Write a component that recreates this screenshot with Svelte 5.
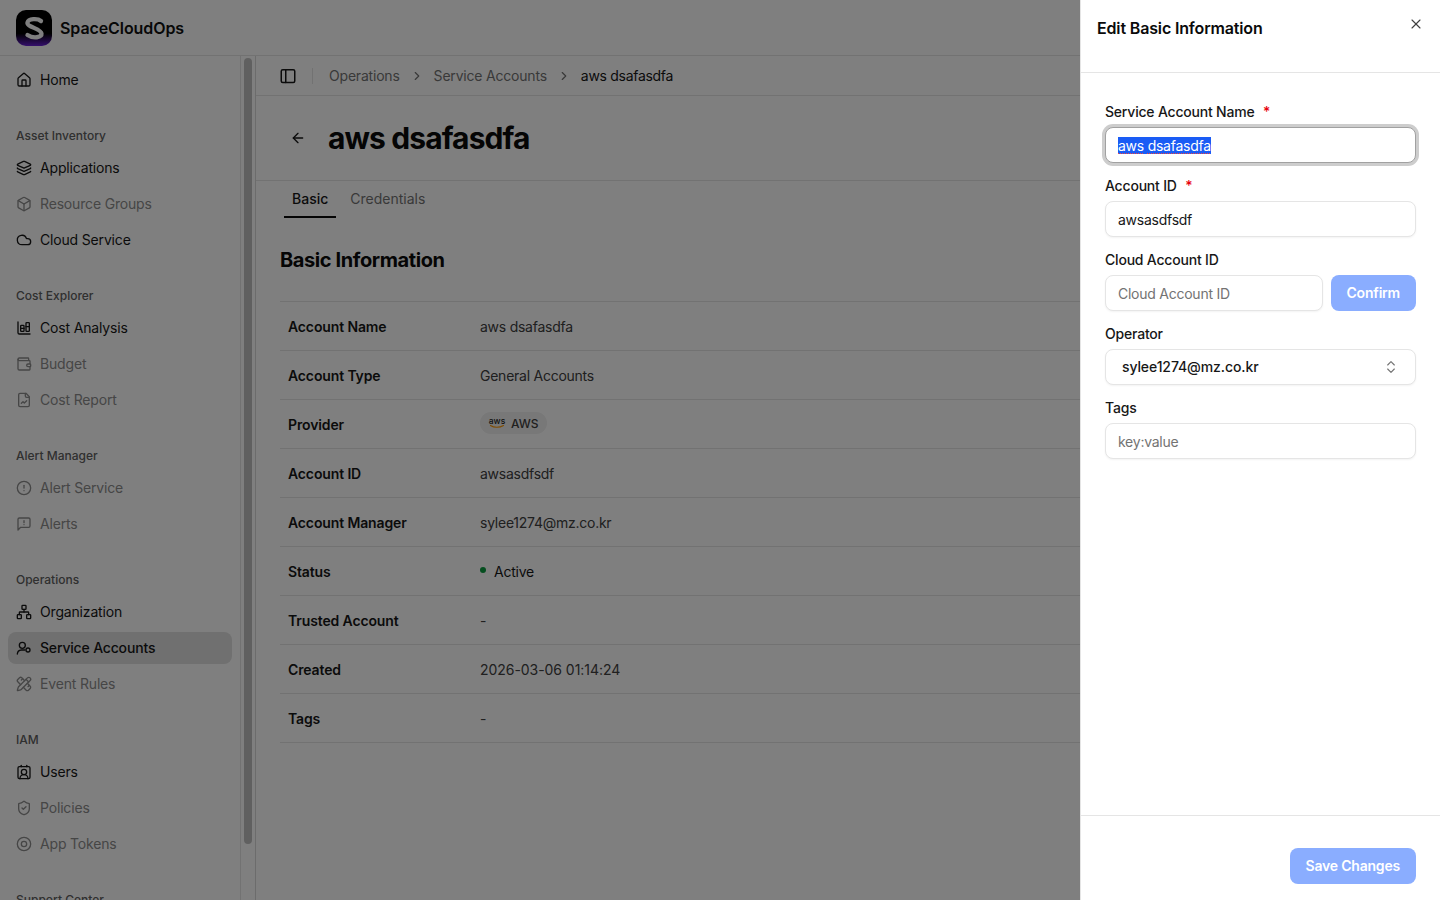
<script>
  import { onMount } from 'svelte';

  let nameInput;

  const icons = {
    home: '<path d="M15 21v-8a1 1 0 0 0-1-1h-4a1 1 0 0 0-1 1v8"/><path d="M3 10a2 2 0 0 1 .709-1.528l7-5.999a2 2 0 0 1 2.582 0l7 5.999A2 2 0 0 1 21 10v9a2 2 0 0 1-2 2H5a2 2 0 0 1-2-2z"/>',
    layers: '<path d="M12.83 2.18a2 2 0 0 0-1.66 0L2.6 6.08a1 1 0 0 0 0 1.83l8.58 3.91a2 2 0 0 0 1.66 0l8.58-3.9a1 1 0 0 0 0-1.83z"/><path d="M2 12a1 1 0 0 0 .58.91l8.6 3.91a2 2 0 0 0 1.65 0l8.58-3.9A1 1 0 0 0 22 12"/><path d="M2 17a1 1 0 0 0 .58.91l8.6 3.91a2 2 0 0 0 1.65 0l8.58-3.9A1 1 0 0 0 22 17"/>',
    box: '<path d="M21 8a2 2 0 0 0-1-1.730l-7-4a2 2 0 0 0-2 0l-7 4A2 2 0 0 0 3 8v8a2 2 0 0 0 1 1.730l7 4a2 2 0 0 0 2 0l7-4A2 2 0 0 0 21 16Z"/><path d="m3.300 7 8.700 5 8.700-5"/><path d="M12 22V12"/>',
    cloud: '<path d="M17.500 19H9a7 7 0 1 1 6.710-9h1.790a4.500 4.500 0 1 1 0 9Z"/>',
    chart: '<path d="M3 3v16a2 2 0 0 0 2 2h16"/><rect x="7" y="8" width="5" height="9" rx="1"/><rect x="15" y="4" width="5" height="13" rx="1"/><path d="M7 12.500h5M15 10h5"/>',
    wallet: '<path d="M19 7V4a1 1 0 0 0-1-1H5a2 2 0 0 0 0 4h15a1 1 0 0 1 1 1v4h-3a2 2 0 0 0 0 4h3a1 1 0 0 0 1-1v-2a1 1 0 0 0-1-1"/><path d="M3 5v14a2 2 0 0 0 2 2h15a1 1 0 0 0 1-1v-4"/>',
    report: '<path d="M15 2H6a2 2 0 0 0-2 2v16a2 2 0 0 0 2 2h12a2 2 0 0 0 2-2V7Z"/><path d="M14 2v4a2 2 0 0 0 2 2h4"/><path d="m16 13-3.500 3.500-2-2L8 17"/>',
    alert: '<circle cx="12" cy="12" r="10"/><path d="M12 8v4"/><path d="M12 16h.01"/>',
    message: '<path d="M21 15a2 2 0 0 1-2 2H7l-4 4V5a2 2 0 0 1 2-2h14a2 2 0 0 1 2 2z"/><path d="M12 7v3"/><path d="M12 13h.01"/>',
    org: '<rect x="16" y="16" width="6" height="6" rx="1"/><rect x="2" y="16" width="6" height="6" rx="1"/><rect x="9" y="2" width="6" height="6" rx="1"/><path d="M5 16v-3a1 1 0 0 1 1-1h12a1 1 0 0 1 1 1v3"/><path d="M12 12V8"/>',
    account: '<circle cx="9.500" cy="8" r="4.500"/><path d="M2 21a6.500 6.500 0 0 1 6-6h5.500"/><circle cx="18" cy="15" r="3"/>',
    rules: '<path d="M13 7 8.700 2.700a2.410 2.410 0 0 0-3.400 0L2.700 5.300a2.410 2.410 0 0 0 0 3.400L7 13"/><path d="m8 6 2-2"/><path d="m18 16 2-2"/><path d="m17 11 4.300 4.300c.94.94.94 2.460 0 3.400l-2.600 2.600c-.94.94-2.460.94-3.400 0L11 17"/><path d="M21.174 6.812a1 1 0 0 0-3.986-3.987L3.842 16.174a2 2 0 0 0-.5.83l-1.321 4.352a.5.5 0 0 0 .623.622l4.353-1.320a2 2 0 0 0 .83-.497z"/><path d="m15 5 4 4"/>',
    badge: '<path d="M16 2v2"/><path d="M17.915 22a6 6 0 0 0-12 0"/><path d="M8 2v2"/><circle cx="12" cy="12" r="4"/><rect x="3" y="4" width="18" height="18" rx="2"/>',
    shield: '<path d="M20 13c0 5-3.500 7.500-7.660 8.950a1 1 0 0 1-.67-.01C7.500 20.500 4 18 4 13V6a1 1 0 0 1 1-1c2 0 4.500-1.200 6.240-2.720a1.170 1.170 0 0 1 1.520 0C14.510 3.810 17 5 19 5a1 1 0 0 1 1 1z"/><path d="m9 12 2 2 4-4"/>',
    token: '<circle cx="12" cy="12" r="10"/><circle cx="12" cy="12" r="4"/>'
  };

  const groups = [
    { items: [{ label: 'Home', icon: 'home' }] },
    {
      title: 'Asset Inventory',
      items: [
        { label: 'Applications', icon: 'layers' },
        { label: 'Resource Groups', icon: 'box', off: true },
        { label: 'Cloud Service', icon: 'cloud' }
      ]
    },
    {
      title: 'Cost Explorer',
      items: [
        { label: 'Cost Analysis', icon: 'chart' },
        { label: 'Budget', icon: 'wallet', off: true },
        { label: 'Cost Report', icon: 'report', off: true }
      ]
    },
    {
      title: 'Alert Manager',
      items: [
        { label: 'Alert Service', icon: 'alert', off: true },
        { label: 'Alerts', icon: 'message', off: true }
      ]
    },
    {
      title: 'Operations',
      items: [
        { label: 'Organization', icon: 'org' },
        { label: 'Service Accounts', icon: 'account', active: true },
        { label: 'Event Rules', icon: 'rules', off: true }
      ]
    },
    {
      title: 'IAM',
      items: [
        { label: 'Users', icon: 'badge' },
        { label: 'Policies', icon: 'shield', off: true },
        { label: 'App Tokens', icon: 'token', off: true }
      ]
    },
    { title: 'Support Center', items: [] }
  ];

  const rows = [
    { label: 'Account Name', value: 'aws dsafasdfa' },
    { label: 'Account Type', value: 'General Accounts' },
    { label: 'Provider', kind: 'provider' },
    { label: 'Account ID', value: 'awsasdfsdf' },
    { label: 'Account Manager', value: 'sylee1274@mz.co.kr' },
    { label: 'Status', kind: 'status' },
    { label: 'Trusted Account', value: '-' },
    { label: 'Created', value: '2026-03-06 01:14:24', numeric: true },
    { label: 'Tags', value: '-' }
  ];

  onMount(() => {
    nameInput.focus();
    nameInput.select();
  });
</script>

<div class="page">
  <header class="topbar">
    <svg class="logo" width="36" height="36" viewBox="0 0 36 36">
      <defs>
        <linearGradient id="logo-bg" x1="0" y1="0" x2="0" y2="1">
          <stop offset="0.65" stop-color="#000" />
          <stop offset="1" stop-color="#6a1fd8" />
        </linearGradient>
      </defs>
      <rect width="36" height="36" rx="10" fill="url(#logo-bg)" />
      <path d="M25 11C21.500 8 12.500 8.500 11.500 12.500c-1 4.500 13.500 6 14 11 .4 4-8 5.500-14 1.500" fill="none" stroke="#fff" stroke-width="4.300" stroke-linecap="round" />
    </svg>
    <span class="brand">SpaceCloudOps</span>
  </header>

  <div class="body">
    <aside class="sidebar">
      <nav class="nav">
        {#each groups as group}
          <div class="group">
            {#if group.title}
              <div class="group-title"><span>{group.title}</span></div>
            {/if}
            {#each group.items as item}
              <div class="item" class:off={item.off} class:active={item.active}>
                <svg class="nav-icon" width="16" height="16" viewBox="0 0 24 24">{@html icons[item.icon]}</svg>
                <span>{item.label}</span>
              </div>
            {/each}
          </div>
        {/each}
      </nav>
      <div class="track"><div class="thumb"></div></div>
    </aside>

    <main class="main">
      <div class="crumbs">
        <svg class="stroke" width="18" height="18" viewBox="0 0 24 24">
          <rect x="3" y="3.500" width="18" height="17" rx="2" />
          <path d="M9 3.500v17" />
        </svg>
        <span class="crumb-sep"></span>
        <span class="crumb">Operations</span>
        <svg class="chev" width="14" height="14" viewBox="0 0 24 24"><path d="m9 18 6-6-6-6" /></svg>
        <span class="crumb">Service Accounts</span>
        <svg class="chev" width="14" height="14" viewBox="0 0 24 24"><path d="m9 18 6-6-6-6" /></svg>
        <span class="crumb current">aws dsafasdfa</span>
      </div>

      <div class="title-row">
        <svg class="stroke back" width="16" height="16" viewBox="0 0 24 24"><path d="m12 19-7-7 7-7" /><path d="M19 12H5" /></svg>
        <h1>aws dsafasdfa</h1>
      </div>

      <div class="tabs">
        <div class="tab selected">Basic</div>
        <div class="tab">Credentials</div>
      </div>

      <section class="info">
        <h2>Basic Information</h2>
        <div class="table">
          {#each rows as row}
            <div class="row">
              <div class="row-label">{row.label}</div>
              <div class="row-value" class:numeric={row.numeric}>
                {#if row.kind === 'provider'}
                  <span class="chip">
                    <svg width="18" height="14" viewBox="0 0 18 14">
                      <text x="9" y="7.500" text-anchor="middle" class="aws-word">aws</text>
                      <path d="M2.500 9.500c3.500 2.400 9 2.400 13 0" fill="none" stroke="#f90" stroke-width="1.100" stroke-linecap="round" />
                    </svg>
                    AWS
                  </span>
                {:else if row.kind === 'status'}
                  <span class="status"><i class="dot"></i>Active</span>
                {:else}
                  {row.value}
                {/if}
              </div>
            </div>
          {/each}
        </div>
      </section>
    </main>
  </div>

  <div class="overlay"></div>

  <aside class="drawer">
    <div class="drawer-head">
      <h3>Edit Basic Information</h3>
      <svg class="close" width="16" height="16" viewBox="0 0 24 24"><path d="M18 6 6 18" /><path d="m6 6 12 12" /></svg>
    </div>

    <form class="drawer-body" on:submit|preventDefault>
      <div class="field">
        <label for="f-name">Service Account Name <b>*</b></label>
        <div class="spell-wrap">
          <input id="f-name" class="focused" bind:this={nameInput} value="aws dsafasdfa" spellcheck="false" />
          <i class="squiggle one"></i>
          <i class="squiggle two"></i>
        </div>
      </div>
      <div class="field">
        <label for="f-id">Account ID <b>*</b></label>
        <input id="f-id" value="awsasdfsdf" spellcheck="false" />
      </div>
      <div class="field">
        <label for="f-cloud">Cloud Account ID</label>
        <div class="inline">
          <input id="f-cloud" placeholder="Cloud Account ID" />
          <button type="button" class="primary">Confirm</button>
        </div>
      </div>
      <div class="field">
        <label for="f-op">Operator</label>
        <div id="f-op" class="select">
          <span>sylee1274@mz.co.kr</span>
          <svg width="16" height="16" viewBox="0 0 24 24"><path d="m7 15 5 5 5-5" /><path d="m7 9 5-5 5 5" /></svg>
        </div>
      </div>
      <div class="field">
        <label for="f-tags">Tags</label>
        <input id="f-tags" placeholder="key:value" />
      </div>
    </form>

    <div class="drawer-foot">
      <button type="button" class="primary">Save Changes</button>
    </div>
  </aside>
</div>

<style>
  :global(body) {
    margin: 0;
    font-family: Inter, "Liberation Sans", sans-serif;
    color: #111;
    background: #fff;
  }

  .page {
    height: 900px;
    overflow: hidden;
    display: flex;
    flex-direction: column;
  }

  .topbar {
    height: 56px;
    box-sizing: border-box;
    flex: none;
    display: flex;
    align-items: center;
    gap: 8px;
    padding-left: 16px;
    border-bottom: 1px solid #e5e5e5;
  }

  .brand {
    font-size: 16px;
    font-weight: 600;
    letter-spacing: -0.08px;
  }

  .body {
    flex: 1;
    display: flex;
    min-height: 0;
  }

  .sidebar {
    width: 256px;
    flex: none;
    display: flex;
    overflow: hidden;
    box-sizing: border-box;
    border-right: 1px solid #d8d8d8;
  }

  .nav {
    width: 241px;
    flex: none;
    box-sizing: border-box;
    padding: 8px;
    border-right: 1px solid #e5e5e5;
    display: flex;
    flex-direction: column;
    gap: 24px;
  }

  .group {
    display: flex;
    flex-direction: column;
    gap: 4px;
  }

  .group-title {
    height: 32px;
    margin-bottom: -4px;
    padding-left: 8px;
    display: flex;
    align-items: center;
    font-size: 12px;
    font-weight: 500;
    color: #606060;
    flex: none;
  }

  .group-title span {
    margin-bottom: 2px;
  }

  .item {
    height: 32px;
    flex: none;
    display: flex;
    align-items: center;
    gap: 8px;
    padding: 0 8px;
    border-radius: 8px;
    font-size: 14px;
    letter-spacing: -0.17px;
    color: #171717;
  }

  .item span {
    margin-bottom: 2px;
  }

  .item.active {
    background: #e0e0e0;
    font-weight: 500;
  }

  .item.off {
    color: #8c8c8c;
  }

  .nav-icon {
    flex: none;
    fill: none;
    stroke: currentColor;
    stroke-width: 2;
    stroke-linecap: round;
    stroke-linejoin: round;
  }

  .track {
    flex: 1;
    padding: 2px 3px 0 3px;
  }

  .thumb {
    height: 786px;
    border-radius: 4px;
    background: #c1c1c1;
  }

  .main {
    flex: 1;
    min-width: 0;
  }

  .crumbs {
    height: 40px;
    box-sizing: border-box;
    display: flex;
    align-items: center;
    padding-left: 23px;
    border-bottom: 1px solid #e5e5e5;
    font-size: 14px;
    letter-spacing: -0.2px;
  }

  .stroke {
    flex: none;
    fill: none;
    stroke: #171717;
    stroke-width: 2;
    stroke-linecap: round;
    stroke-linejoin: round;
  }

  .crumb-sep {
    width: 1px;
    height: 16px;
    margin: 0 16px 0 15px;
    background: #e5e5e5;
  }

  .crumb {
    color: #737373;
  }

  .crumb.current {
    color: #171717;
    letter-spacing: -0.3px;
  }

  .chev {
    margin: 0 10px;
    fill: none;
    stroke: #737373;
    stroke-width: 2;
    stroke-linecap: round;
    stroke-linejoin: round;
  }

  .title-row {
    height: 85px;
    box-sizing: border-box;
    display: flex;
    align-items: center;
    padding-left: 34px;
    border-bottom: 1px solid #e5e5e5;
  }

  .back {
    margin-right: 22px;
  }

  h1 {
    margin: 0;
    font-size: 30px;
    font-weight: 700;
    letter-spacing: -0.9px;
    color: #0a0a0a;
  }

  .tabs {
    display: flex;
    padding-left: 28px;
    height: 37px;
  }

  .tab {
    padding: 9px 8px 0;
    height: 37px;
    box-sizing: border-box;
    margin-right: 6px;
    font-size: 14px;
    color: #737373;
  }

  .tab.selected {
    color: #171717;
    font-weight: 500;
    border-bottom: 2px solid #0a0a0a;
  }

  .info {
    padding: 29px 0 0 24px;
  }

  h2 {
    margin: 0 0 28px;
    font-size: 20px;
    line-height: 26px;
    font-weight: 700;
    letter-spacing: -0.4px;
    color: #0a0a0a;
  }

  .table {
    border-top: 1px solid #e5e5e5;
  }

  .row {
    height: 49px;
    box-sizing: border-box;
    display: flex;
    align-items: center;
    padding-left: 8px;
    border-bottom: 1px solid #e5e5e5;
    font-size: 14px;
  }

  .row-label {
    width: 192px;
    font-weight: 600;
    letter-spacing: -0.13px;
    color: #171717;
  }

  .row-value {
    color: #404040;
    letter-spacing: -0.25px;
  }

  .row-value.numeric {
    letter-spacing: -0.05px;
  }

  .chip {
    display: inline-flex;
    align-items: center;
    gap: 5px;
    height: 22px;
    padding: 0 8px;
    border-radius: 11px;
    background: #f0f0f0;
    font-size: 12px;
    font-weight: 500;
    letter-spacing: 0;
    transform: translateY(-1px);
  }

  .chip svg {
    overflow: visible;
  }

  .aws-word {
    font-size: 8.500px;
    font-weight: 500;
    fill: #262626;
  }

  .status {
    display: flex;
    align-items: center;
    gap: 8px;
    color: #171717;
  }

  .dot {
    width: 6px;
    height: 6px;
    border-radius: 50%;
    background: #0a9c3f;
    transform: translateY(-1px);
  }

  .overlay {
    position: fixed;
    inset: 0;
    background: rgba(0, 0, 0, 0.5);
  }

  .drawer {
    position: fixed;
    top: 0;
    right: 0;
    bottom: 0;
    width: 360px;
    box-sizing: border-box;
    background: #fff;
    border-left: 1px solid #e5e5e5;
    display: flex;
    flex-direction: column;
  }

  .drawer-head {
    height: 73px;
    box-sizing: border-box;
    flex: none;
    display: flex;
    align-items: flex-start;
    justify-content: space-between;
    padding: 16px 16px 0;
    border-bottom: 1px solid #e5e5e5;
  }

  h3 {
    margin: 0;
    font-size: 16px;
    line-height: 24px;
    font-weight: 600;
    letter-spacing: -0.15px;
    color: #0a0a0a;
  }

  .close {
    fill: none;
    stroke: #404040;
    stroke-width: 1.700;
    stroke-linecap: round;
  }

  .drawer-body {
    flex: 1;
    padding: 30px 24px 0;
    display: flex;
    flex-direction: column;
    gap: 14px;
  }

  .field {
    display: flex;
    flex-direction: column;
    gap: 6px;
  }

  label {
    font-size: 14px;
    line-height: 18px;
    font-weight: 500;
    letter-spacing: -0.2px;
    color: #171717;
  }

  label b {
    color: #e7000b;
    margin-left: 5px;
    font-weight: 500;
  }

  input,
  .select {
    width: 100%;
    height: 36px;
    box-sizing: border-box;
    border: 1px solid #e5e5e5;
    border-radius: 8px;
    padding: 0 12px;
    font-family: inherit;
    font-size: 14px;
    letter-spacing: -0.25px;
    color: #171717;
    background: #fff;
    box-shadow: 0 1px 2px rgba(0, 0, 0, 0.05);
    outline: none;
  }

  input::placeholder {
    color: #737373;
  }

  input.focused {
    border-color: #a1a1a1;
    box-shadow: 0 0 0 3px #cdcdcd;
  }

  input::selection {
    background: #1a5cf5;
    color: #fff;
  }

  .spell-wrap {
    position: relative;
    display: flex;
  }

  .squiggle {
    position: absolute;
    top: 26px;
    height: 0;
    border-bottom: 1px dotted #ef4444;
    pointer-events: none;
  }

  .squiggle.one {
    left: 13px;
    width: 25px;
  }

  .squiggle.two {
    left: 42px;
    width: 63px;
  }

  .inline {
    display: flex;
    gap: 8px;
  }

  .inline input {
    flex: 1;
    min-width: 0;
  }

  .select {
    display: flex;
    align-items: center;
    justify-content: space-between;
    padding: 0 16px;
    font-weight: 500;
    letter-spacing: -0.1px;
  }

  .select span {
    margin-bottom: 2px;
  }

  .select svg {
    fill: none;
    stroke: #737373;
    stroke-width: 1.700;
    stroke-linecap: round;
    stroke-linejoin: round;
  }

  .primary {
    flex: none;
    height: 36px;
    padding: 0 16px 2px;
    border: none;
    border-radius: 8px;
    background: #8aadff;
    color: #fff;
    font-family: inherit;
    font-size: 14px;
    font-weight: 600;
    letter-spacing: -0.2px;
  }

  .drawer-foot {
    height: 85px;
    box-sizing: border-box;
    flex: none;
    display: flex;
    justify-content: flex-end;
    align-items: flex-start;
    padding: 32px 24px 0;
    border-top: 1px solid #e5e5e5;
  }
</style>
